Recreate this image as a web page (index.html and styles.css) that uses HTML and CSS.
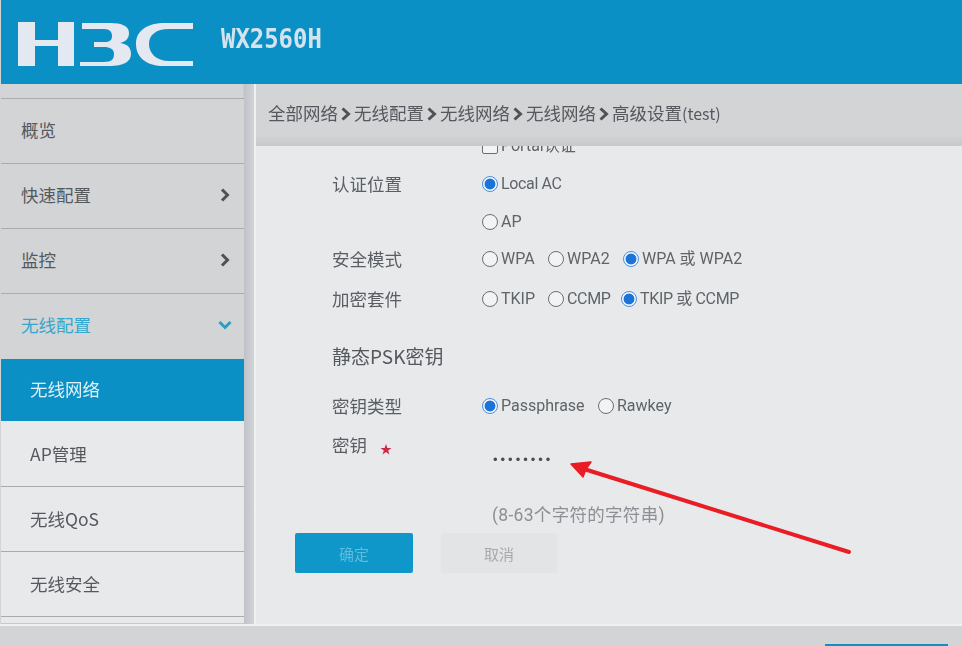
FILE: index.html
```html
<!DOCTYPE html>
<html lang="zh-CN">
<head>
<meta charset="utf-8">
<title>H3C WX2560H</title>
<link rel="stylesheet" href="styles.css">
</head>
<body>
<div class="page">
  <header class="topbar">
    <svg class="logo" width="178" height="48" viewBox="0 0 178 48" aria-label="H3C">
      <g fill="#e4e9f1">
        <path d="M0 1h17v18h23V1h16v44H40V25H17v20H0z"/>
        <path d="M64 2h28c12 0 19 3 19 10 0 6-4 9-9 10 7 1 11 4 11 11 0 8-8 12-21 12H62v-4h24c8 0 10-3 10-8s-4-7-10-7H76v-5h10c6 0 8-2 8-6s-2-7-8-7H64z"/>
        <path d="M175 2v6h-24c-13 0-20 6-20 15s7 17 20 17h24v5h-29c-17 0-28-8-28-22S130 2 147 2z"/>
      </g>
    </svg>
    <span class="model">WX2560H</span>
  </header>
  <div class="layout">
    <nav class="side">
      <a class="item top">概览</a>
      <a class="item top">快速配置<svg class="chev" width="10" height="14" viewBox="0 0 10 14"><path d="M2 1.500 7.500 7 2 12.500" fill="none" stroke="#4d5257" stroke-width="3"/></svg></a>
      <a class="item top">监控<svg class="chev" width="10" height="14" viewBox="0 0 10 14"><path d="M2 1.500 7.500 7 2 12.500" fill="none" stroke="#4d5257" stroke-width="3"/></svg></a>
      <a class="item top open">无线配置<svg class="chev" width="14" height="10" viewBox="0 0 14 10"><path d="M1.500 2 7 7.500 12.500 2" fill="none" stroke="#2a9fc2" stroke-width="3"/></svg></a>
      <a class="item sub active">无线网络</a>
      <a class="item sub">AP管理</a>
      <a class="item sub">无线QoS</a>
      <a class="item sub">无线安全</a>
      <div class="side-end"></div>
    </nav>
    <main class="main">
      <div class="crumbs">
        <span>全部网络</span><svg class="sep" width="16" height="14" viewBox="0 0 16 14"><path d="M4.500 1.500 10.500 7 4.500 12.500" fill="none" stroke="#4d5257" stroke-width="3"/></svg><span>无线配置</span><svg class="sep" width="16" height="14" viewBox="0 0 16 14"><path d="M4.500 1.500 10.500 7 4.500 12.500" fill="none" stroke="#4d5257" stroke-width="3"/></svg><span>无线网络</span><svg class="sep" width="16" height="14" viewBox="0 0 16 14"><path d="M4.500 1.500 10.500 7 4.500 12.500" fill="none" stroke="#4d5257" stroke-width="3"/></svg><span>无线网络</span><svg class="sep" width="16" height="14" viewBox="0 0 16 14"><path d="M4.500 1.500 10.500 7 4.500 12.500" fill="none" stroke="#4d5257" stroke-width="3"/></svg><span>高级设置<span class="latin">(test)</span></span>
      </div>
      <div class="panel">
        <form class="form">
          <div class="row clip">
            <span class="label"></span>
            <div class="opts"><label class="opt"><i class="box"></i>Portal认证</label></div>
          </div>
          <div class="row r1">
            <span class="label">认证位置</span>
            <div class="opts"><label class="opt narrow"><i class="radio on"></i>Local AC</label></div>
          </div>
          <div class="row r2">
            <span class="label"></span>
            <div class="opts"><label class="opt"><i class="radio"></i>AP</label></div>
          </div>
          <div class="row r3">
            <span class="label">安全模式</span>
            <div class="opts">
              <label class="opt w1"><i class="radio"></i>WPA</label>
              <label class="opt w2"><i class="radio"></i>WPA2</label>
              <label class="opt"><i class="radio on"></i>WPA 或 WPA2</label>
            </div>
          </div>
          <div class="row r4">
            <span class="label">加密套件</span>
            <div class="opts">
              <label class="opt w1"><i class="radio"></i>TKIP</label>
              <label class="opt w3 narrow"><i class="radio"></i>CCMP</label>
              <label class="opt narrow"><i class="radio on"></i>TKIP 或 CCMP</label>
            </div>
          </div>
          <h2 class="section">静态PSK密钥</h2>
          <div class="row r5">
            <span class="label">密钥类型</span>
            <div class="opts">
              <label class="opt w4"><i class="radio on"></i>Passphrase</label>
              <label class="opt"><i class="radio"></i>Rawkey</label>
            </div>
          </div>
          <div class="row r6">
            <span class="label">密钥<em class="req">★</em></span>
            <div class="pw">••••••••</div>
          </div>
          <p class="hint">(8-63个字符的字符串)</p>
          <div class="actions">
            <button type="button" class="btn ok">确定</button>
            <button type="button" class="btn cancel">取消</button>
          </div>
        </form>
      </div>
    </main>
  </div>
  <footer class="foot"><span class="foot-btn"></span></footer>
  <svg class="arrow" width="962" height="646" viewBox="0 0 962 646">
    <path d="M849 552 584 469" stroke="#ea1c24" stroke-width="4" stroke-linecap="round" fill="none"/>
    <path d="M571 464 591 462 586 469 583 477z" fill="#ea1c24" stroke="#ea1c24" stroke-width="1.500" stroke-linejoin="round"/>
  </svg>
</div>
</body>
</html>
```
FILE: styles.css
```css
* { box-sizing: border-box; }
html, body { margin: 0; height: 100%; }
body {
  background: #d2d4d6;
  font-family: "Noto Sans CJK SC", "Noto Sans", sans-serif;
  color: #55595e;
  overflow: hidden;
}
.page {
  position: relative;
  width: 962px;
  height: 646px;
  overflow: hidden;
  display: flex;
  flex-direction: column;
  filter: blur(0.6px);
}
.topbar {
  height: 84px;
  flex: none;
  background: #0b90c6;
  margin-left: 1px;
  display: flex;
  align-items: flex-start;
  padding: 21px 0 0 17px;
  gap: 25px;
}
.logo { flex: none; }
.model {
  font-family: "DejaVu Sans Mono", monospace;
  font-weight: 700;
  font-size: 26px;
  line-height: 28px;
  margin-top: 4px;
  color: #d5e3ee;
  transform: scaleX(.92);
  transform-origin: left center;
}
.layout { flex: 1; display: flex; min-height: 0; }
.side {
  width: 256px;
  flex: none;
  padding: 14px 10px 0 1px;
  border-right: 2px solid #f0f1f2;
  background: linear-gradient(90deg, #d2d4d6 0, #d2d4d6 243px, #bfc3c8 244px, #d0d2d4 253px);
  display: flex;
  flex-direction: column;
}
.item {
  display: flex;
  align-items: center;
  justify-content: space-between;
  height: 65px;
  flex: none;
  font-size: 17.500px;
  line-height: 24px;
  border-top: 1px solid #a9acaf;
  padding: 0 14px 2px 20px;
  color: #55595e;
}
.item.top { background: #d2d4d6; }
.item.open { color: #36a6cc; padding-right: 12px; }
.item.sub { background: #e8e9eb; padding-left: 29px; padding-bottom: 0; }
.item.active {
  background: #0b90c6;
  color: #dff0f7;
  height: 62px;
  border-top: 0;
  margin-top: 1px;
  padding-bottom: 2px;
}
.item.active + .item { border-top: 0; }
.side-end {
  flex: 1;
  background: #e8e9eb;
  border-top: 1px solid #a9acaf;
  border-bottom: 1px solid #c6c8cb;
}
.main { flex: 1; min-width: 0; display: flex; flex-direction: column; }
.crumbs {
  height: 62px;
  flex: none;
  background: #d2d4d6;
  padding: 17px 0 0 12px;
  font-size: 17.500px;
  line-height: 24px;
  display: flex;
  align-items: flex-start;
  white-space: nowrap;
  box-shadow: inset 0 -14px 10px -10px #c4c6c9;
}
.latin { font-size: 16px; }
.sep { flex: none; margin-top: 6px; }
.panel {
  flex: 1;
  min-height: 0;
  background: #e7e9eb;
  overflow: hidden;
  position: relative;
}
.form { padding: 0 0 0 76px; }
.row { display: flex; align-items: flex-start; }
.label {
  width: 150px;
  flex: none;
  font-size: 17.500px;
  line-height: 24px;
  color: #5a5e63;
  white-space: nowrap;
}
.opts { display: flex; align-items: center; }
.opt {
  display: flex;
  align-items: center;
  font-family: "Roboto", "Noto Sans CJK SC", sans-serif;
  font-size: 16px;
  line-height: 24px;
  color: #5f6468;
  white-space: nowrap;
  gap: 3px;
}
.narrow { letter-spacing: -0.35px; }
.clip { height: 11px; margin-top: -12px; }
.r1 { margin-top: 27px; }
.r2 { margin-top: 14px; }
.r3 { margin-top: 13px; }
.r4 { margin-top: 16px; }
.r5 { margin-top: 24px; }
.r6 { margin-top: 15px; }
.w1 { width: 66px; }
.w2 { width: 75px; }
.w3 { width: 73px; }
.w4 { width: 116px; }
.radio {
  width: 16px;
  height: 16px;
  flex: none;
  border: 1.300px solid #6b6f73;
  border-radius: 50%;
  background: #f2f3f4;
}
.radio.on {
  border: 1.500px solid #4a90dc;
  background: radial-gradient(circle, #1c74d8 0 5px, #f2f6fb 5.800px);
}
.box {
  width: 16px;
  height: 16px;
  flex: none;
  border: 1.300px solid #6b6f73;
  border-radius: 2px;
  background: #f2f3f4;
}
.section {
  margin: 31px 0 0;
  font-size: 19px;
  line-height: 28px;
  font-weight: 400;
  color: #55595e;
}
.req {
  font-style: normal;
  color: #cf2a44;
  font-size: 12px;
  margin-left: 13px;
  vertical-align: -2px;
}
.pw {
  font-family: "Liberation Sans", sans-serif;
  color: #4a4e53;
  font-size: 13px;
  letter-spacing: 3px;
  line-height: 18px;
  margin-top: 18px;
  padding-left: 11px;
}
.hint {
  margin: 35px 0 0 160px;
  font-family: "Roboto", "Noto Sans CJK SC", sans-serif;
  font-size: 17.500px;
  letter-spacing: .3px;
  line-height: 22px;
  color: #8c9094;
}
.actions { display: flex; gap: 28px; margin: 7px 0 0 -37px; }
.btn {
  width: 118px;
  height: 40px;
  padding: 0;
  border: 0;
  border-radius: 2px;
  font-family: "Noto Sans CJK SC", sans-serif;
  font-size: 15px;
}
.ok { background: #0f97c9; color: #5fbcdc; }
.cancel { width: 116px; background: #e2e4e5; color: #a8abae; }
.foot {
  height: 22px;
  flex: none;
  display: flex;
  justify-content: flex-end;
  padding: 18px 14px 0 0;
  border-top: 2px solid #eef0f1;
  background: #d2d4d6;
}
.foot-btn { width: 123px; height: 3px; background: #0f90c4; }
.arrow { position: absolute; left: 0; top: 0; pointer-events: none; }
```
